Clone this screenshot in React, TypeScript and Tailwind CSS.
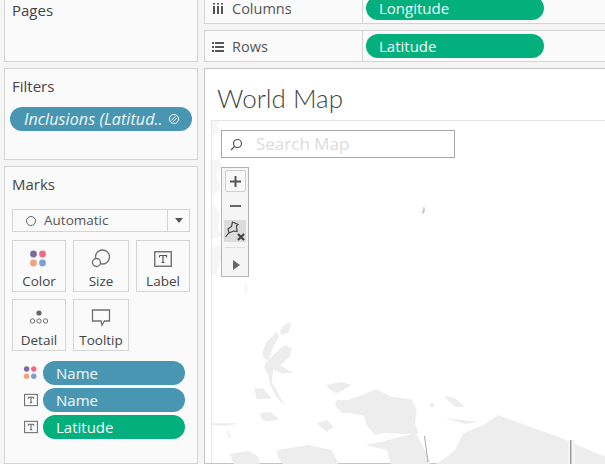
const FONT = "font-['Open_Sans','Noto_Sans',sans-serif]";

function Pill({ children, green, className = "" }: { children: React.ReactNode; green?: boolean; className?: string }) {
  return (
    <div className={`flex items-center h-6 rounded-full pl-[13px] text-[15px] leading-[16px] text-[#f2fbfa] ${green ? "bg-[#03af7c]" : "bg-[#4996b2]"} ${className}`}>
      {children}
    </div>
  );
}

function ColorDots({ size = 20 }: { size?: number }) {
  return (
    <svg width={size} height={size} viewBox="0 0 20 20">
      <circle cx="4.5" cy="5" r="3.4" fill="#7b6a9a" />
      <circle cx="13.5" cy="5" r="3.4" fill="#ef6a82" />
      <circle cx="4.5" cy="14" r="3.4" fill="#f0a27a" />
      <circle cx="13.5" cy="14" r="3.4" fill="#7f9fd0" />
    </svg>
  );
}

function TextBox({ size = 18 }: { size?: number }) {
  return (
    <svg width={size} height={size} viewBox="0 0 18 16">
      <rect x="0.75" y="0.75" width="16.5" height="14.5" fill="none" stroke="#707070" strokeWidth="1.4" />
      <path d="M5.5 4.5h7v2M9 4.5v7M7.5 11.5h3M5.5 6.5v-2" fill="none" stroke="#555" strokeWidth="1.2" />
    </svg>
  );
}

function MarkButton({ label, icon, w }: { label: string; icon: React.ReactNode; w: string }) {
  return (
    <div className={`flex flex-col items-center border border-[#d4d4d4] h-[52px] ${w}`}>
      <div className="h-[31px] flex items-center justify-center pt-1">{icon}</div>
      <span className="text-[13.5px] leading-[18px] text-[#444]">{label}</span>
    </div>
  );
}

function MapShapes() {
  return (
    <svg className="block w-[393px] h-[343px]" viewBox="212 121 393 343">
      {/* coast bits on the left edge */}
      <g fill="#f6f6f6">
        <path d="M212 121h8l-3 6 3 4-8 6z" />
        <path d="M212 160h8l2 8-6 6 4 14-8 8zM212 204l8 8-2 16 4 8-10 4zM212 248l8-4 2 14-6 16-4 2z" />
        <path d="M246 282l2 6-2 8-2-6z" />
      </g>
      <path d="M424 206l1 5-2 3-1-1z" fill="#c4c4c4" />
      <g transform="translate(205 310) scale(0.33333)" fill="#ededed">
        <path d="M232 50L250 35L258 45L250 68L232 75L224 65Z" />
        <path d="M185 95L215 65L222 80L205 110L190 150L175 145L172 125Z" />
        <path d="M180 160L205 135L240 105L260 115L255 140L225 165L265 190L230 190L205 180L200 215L225 260L240 285L215 262L195 225L190 195L178 175Z" />
        <path d="M148 235L175 235L200 265L155 268Z" />
        <path d="M165 310L195 305L222 328L190 335L170 328Z" />
        <path d="M365 225L410 215L438 225L415 240L395 250L375 240Z" />
        <path d="M430 270L515 238L560 260L620 268L635 300L630 340L640 370L600 372L540 368L510 375L485 345L478 318L440 310L410 310L390 285L395 270Z" />
        <path d="M715 258L745 262L780 290L750 290Z" />
        <circle cx="681" cy="285" r="7" />
        <path d="M720 325L820 335L780 342Z" />
        <path d="M835 345L880 315L960 345L1060 380L1200 440V470H680L720 445L750 420L775 370Z" />
        <path d="M480 405L530 395L610 375L630 365L660 420L680 470H560L545 420Z" />
        <path d="M335 340L365 330L385 350L365 365Z" />
        <path d="M215 420L310 405L380 420L405 470H240L220 445Z" />
        <path d="M75 432L130 422L160 440L165 470H90Z" />
        <path d="M20 340L105 340L60 348L20 345ZM65 350L78 382L70 380Z" />
      </g>
      <path d="M424.5 436L428 462" stroke="#a8a8a8" fill="none" />
      <rect x="568" y="440" width="7" height="24" fill="#f5f5f5" />
      <rect x="570" y="440" width="1.5" height="24" fill="#9c9c9c" />
    </svg>
  );
}

export default function App() {
  return (
    <div className={`${FONT} w-[605px] h-[464px] overflow-hidden bg-[#f5f5f5] flex pl-1 gap-[6px]`}>
      {/* left cards */}
      <div className="w-[194px] shrink-0 flex flex-col gap-[6px] -mt-3">
        <div className="h-[74px] border border-[#d4d4d4] bg-[#fafafa] px-[7px] pt-[11px] text-[15px] leading-5 text-[#444]">
          Pages
        </div>
        <div className="h-[92px] border border-[#d4d4d4] bg-[#fafafa]">
          <div className="px-[7px] pt-[7px] text-[15px] leading-5 text-[#444]">Filters</div>
          <div className="mt-[11px] ml-[5px] w-[182px] h-6 rounded-full bg-[#4996b2] flex items-center pl-[14px] pr-[12px] text-[16px] tracking-[0.1px] italic text-[#eef9fa]">
            <span className="flex-1 whitespace-nowrap overflow-hidden">Inclusions (Latitud..</span>
            <svg width="12" height="12" viewBox="0 0 12 12" fill="none" stroke="#eef9fa" strokeWidth="1">
              <circle cx="6" cy="6" r="4.6" />
              <path d="M3.2 7.5L7.5 3.2M4.8 9L9 4.8" />
            </svg>
          </div>
        </div>
        <div className="flex-1 border border-[#d4d4d4] bg-[#fafafa] px-[7px]">
          <div className="pt-[7px] text-[15px] leading-5 text-[#444]">Marks</div>
          <div className="mt-[15px] w-[178px] h-[23px] border border-[#d4d4d4] flex items-center text-[13.5px] text-[#555]">
            <div className="flex-1 flex items-center pl-[13px] gap-2 border-r border-[#d4d4d4] h-full">
              <span className="w-[10px] h-[10px] rounded-full border border-[#666]" />
              Automatic
            </div>
            <div className="w-[21px] flex justify-center">
              <span className="border-x-4 border-x-transparent border-t-[5px] border-t-[#555]" />
            </div>
          </div>
          <div className="mt-2 grid grid-cols-[54px_56px_54px] gap-x-[7px] gap-y-[7px] w-[178px]">
            <MarkButton label="Color" w="w-[54px]" icon={<ColorDots />} />
            <MarkButton
              label="Size"
              w="w-[56px]"
              icon={
                <svg width="20" height="20" viewBox="0 0 20 20" fill="none" stroke="#707070" strokeWidth="1.3">
                  <circle cx="11.5" cy="8" r="7" />
                  <circle cx="5.5" cy="13.5" r="4" fill="#fafafa" />
                </svg>
              }
            />
            <MarkButton label="Label" w="w-[54px]" icon={<TextBox />} />
            <MarkButton
              label="Detail"
              w="w-[54px]"
              icon={
                <svg width="20" height="16" viewBox="0 0 20 16" fill="none" stroke="#707070">
                  <circle cx="10" cy="3" r="2.6" fill="#666" stroke="none" />
                  <circle cx="3.5" cy="11" r="2.2" />
                  <circle cx="10" cy="11" r="2.2" />
                  <circle cx="16.5" cy="11" r="2.2" />
                </svg>
              }
            />
            <MarkButton
              label="Tooltip"
              w="w-[56px]"
              icon={
                <svg width="20" height="18" viewBox="0 0 20 18" fill="none" stroke="#707070" strokeWidth="1.3">
                  <path d="M1.5 1h17v11h-5l-2.5 4-1-4h-8.500z" />
                </svg>
              }
            />
          </div>
          <div className="mt-[10px] flex flex-col gap-[3px]">
            <div className="flex items-center">
              <div className="w-[31px] pl-[11px] flex"><ColorDots size={16} /></div>
              <Pill className="w-[142px]">Name</Pill>
            </div>
            <div className="flex items-center">
              <div className="w-[31px] pl-[12px] flex"><TextBox size={14} /></div>
              <Pill className="w-[142px]">Name</Pill>
            </div>
            <div className="flex items-center">
              <div className="w-[31px] pl-[12px] flex"><TextBox size={14} /></div>
              <Pill green className="w-[142px]">Latitude</Pill>
            </div>
          </div>
        </div>
      </div>

      {/* shelves and view */}
      <div className="flex-1 min-w-0 flex flex-col gap-[6px] -mt-[8px]">
        <div className="h-[32px] shrink-0 border border-[#d4d4d4] bg-[#fafafa] flex mr-[-4px]">
          <div className="w-[158px] flex items-center border-r border-[#d4d4d4] pt-[2px] pl-[7px] text-[14.5px] leading-[16px] text-[#555] gap-[8px]">
            <svg width="12" height="12" viewBox="0 0 12 12" fill="#555">
              <rect x="1" y="3" width="2" height="8" /><rect x="5" y="3" width="2" height="8" /><rect x="9" y="3" width="2" height="8" />
              <rect x="1" y="0" width="2" height="1.500" /><rect x="5" y="0" width="2" height="1.500" /><rect x="9" y="0" width="2" height="1.500" />
            </svg>
            Columns
          </div>
          <div className="pl-[3px] pt-[3px]">
            <Pill green className="w-[178px]">Longitude</Pill>
          </div>
        </div>
        <div className="h-[32px] shrink-0 border border-[#d4d4d4] bg-[#fafafa] flex mr-[-4px]">
          <div className="w-[158px] flex items-center border-r border-[#d4d4d4] pt-[1px] pl-[7px] text-[14.5px] text-[#555] gap-[8px]">
            <svg width="12" height="10" viewBox="0 0 12 10" fill="#555">
              <rect x="0" y="0" width="2" height="2" /><rect x="3" y="0" width="9" height="2" />
              <rect x="0" y="4" width="2" height="2" /><rect x="3" y="4" width="9" height="2" />
              <rect x="0" y="8" width="2" height="2" /><rect x="3" y="8" width="9" height="2" />
            </svg>
            Rows
          </div>
          <div className="pl-[3px] pt-[3px]">
            <Pill green className="w-[178px]">Latitude</Pill>
          </div>
        </div>
        <div className="flex-1 min-h-0 border border-[#c4c4c4] bg-white mr-[-4px] flex flex-col">
          <div className="h-[51px] shrink-0 pl-3 pt-[12px] font-['Lato',sans-serif] text-[26px] leading-[34px] font-light text-[#444]">World Map</div>
          <div className="relative flex-1 min-h-0 ml-[6px] border-l border-t border-[#e6e6e6]">
            <MapShapes />
            <div className="absolute left-[9px] top-[9px] w-[234px] h-[28px] border border-[#a8a8a8] bg-white flex items-center pl-[8px] gap-[13px] text-[17px] text-[#dcdcdc]">
              <svg width="13" height="13" viewBox="0 0 13 13" fill="none" stroke="#555" strokeWidth="1.2">
                <circle cx="7.5" cy="5.500" r="4" />
                <path d="M4.500 8.500L1 12" />
              </svg>
              Search Map
            </div>
            <div className="absolute left-[9px] top-[46px] w-[28px] h-[110px] border border-[#b4b4b4] bg-[#f5f5f5] flex flex-col items-center pt-[2px]">
              <div className="w-[21px] h-[22px] border border-[#d0d0d0] rounded-[2px] bg-[#f8f8f8] flex items-center justify-center">
                <svg width="11" height="11" viewBox="0 0 11 11" fill="#555"><path d="M4.500 0h2v4.500H11v2H6.500V11h-2V6.500H0v-2h4.500z" /></svg>
              </div>
              <div className="h-[28px] flex items-center">
                <span className="block w-[11px] h-[2px] bg-[#666]" />
              </div>
              <div className="w-[22px] h-[22px] bg-[#dcdcdc] flex items-center justify-center">
                <svg width="22" height="22" viewBox="0 0 22 22" fill="none" stroke="#444" strokeWidth="1.2">
                  <path d="M8.500 2L14 4.500 12.500 6 13 11.500 9.500 11 5 13 4 9 7.500 6.500zM5 12.500L1.500 17" />
                  <path d="M14 14l6 6M20 14l-6 6" strokeWidth="2.200" />
                </svg>
              </div>
              <div className="mt-[5px] w-5 h-px bg-[#e0e0e0]" />
              <span className="mt-[12px] ml-[2px] border-y-[5px] border-y-transparent border-l-[7px] border-l-[#666]" />
            </div>
          </div>
        </div>
      </div>
    </div>
  );
}
